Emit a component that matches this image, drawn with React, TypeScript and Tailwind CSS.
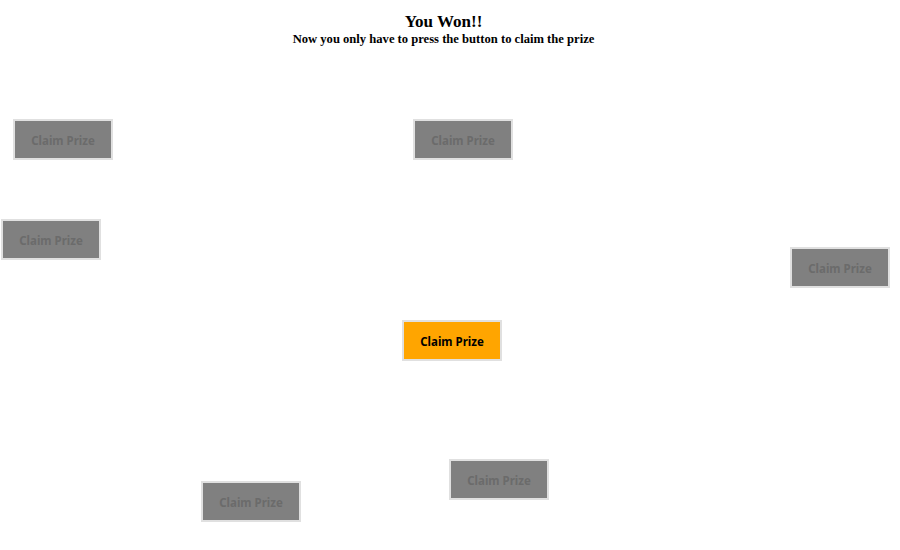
import React from "react";

const decoys: { left: number; top: number }[] = [
  { left: 13, top: 119 },
  { left: 413, top: 119 },
  { left: 1, top: 219 },
  { left: 790, top: 247 },
  { left: 449, top: 459 },
  { left: 201, top: 481 },
];

export default function App() {
  return (
    <div className="relative w-[900px] h-[550px] bg-white overflow-hidden">
      <div className="w-[887px] pt-[12px] text-center text-black font-['Liberation_Serif',serif] font-bold">
        <h1 className="text-[17px] leading-[20px]">You Won!!</h1>
        <p className="text-[12.6px] leading-[15px]">Now you only have to press the button to claim the prize</p>
      </div>
      {decoys.map((d, i) => (
        <button
          key={i}
          style={{ left: d.left, top: d.top }}
          className="absolute w-[100px] h-[41px] pt-[2px] bg-[#808080] border-2 border-[#e0e0e0] text-[#6b6b6b] text-[11.5px] font-bold font-['Noto_Sans',sans-serif]"
        >
          Claim Prize
        </button>
      ))}
      <button
        style={{ left: 402, top: 320 }}
        className="absolute w-[100px] h-[41px] pt-[2px] bg-[#ffa500] border-2 border-[#e0e0e0] text-black text-[11.5px] font-bold font-['Noto_Sans',sans-serif]"
      >
        Claim Prize
      </button>
    </div>
  );
}
